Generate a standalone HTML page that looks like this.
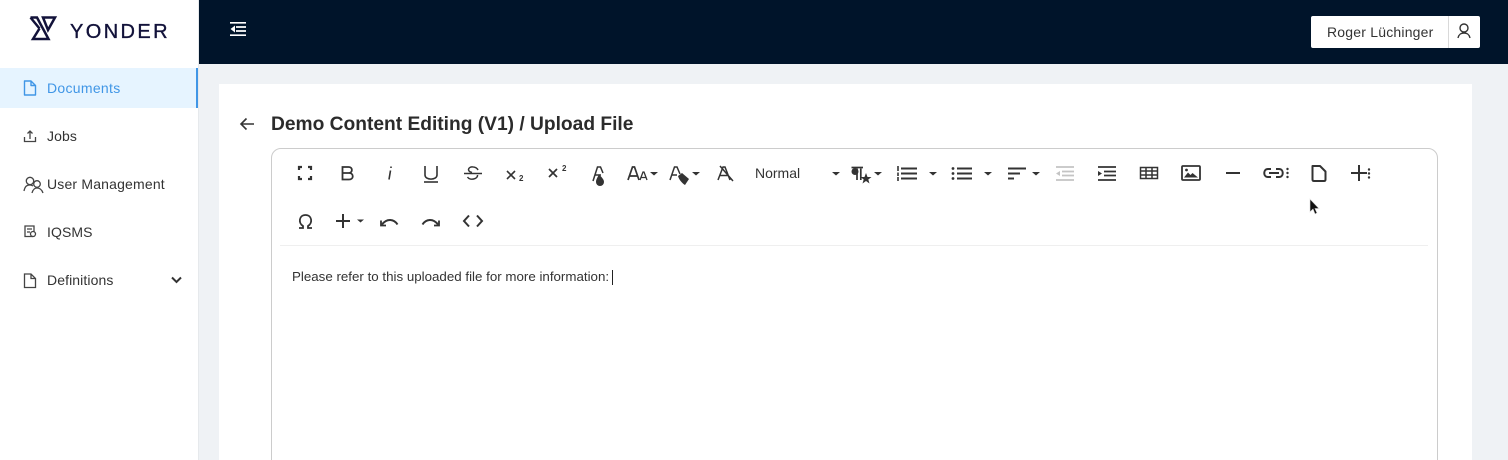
<!DOCTYPE html>
<html><head><meta charset="utf-8"><style>
*{box-sizing:border-box}
html,body{margin:0;padding:0;width:1508px;height:460px;overflow:hidden;background:#eff2f5;font-family:"Liberation Sans",sans-serif}
#w{position:absolute;left:0;top:0;width:1508px;height:460px;overflow:hidden;background:#eff2f5}
.a{position:absolute;white-space:nowrap}
.nav{font-size:14px;color:#333;left:47px;line-height:20px;letter-spacing:.1px}
</style></head><body><div id="w">
<div class="a" style="left:0;top:0;width:199px;height:460px;background:#fff;border-right:1px solid #e6e9ec"></div>
<div class="a" style="left:199px;top:0;width:1309px;height:64px;background:#00142a"></div>
<div class="a" style="left:0;top:68px;width:198px;height:40px;background:#e6f4ff;border-right:2px solid #4096e6"></div>
<div class="a" style="left:219px;top:84px;width:1253px;height:376px;background:#fff"></div>
<div class="a" style="left:271px;top:148px;width:1167px;height:330px;background:#fff;border:1px solid #ccc;border-radius:10px"></div>
<div class="a" style="left:280px;top:245px;width:1148px;height:1px;background:#efefef"></div>

<div class="a" style="left:70px;top:19px;font-size:20px;line-height:26px;letter-spacing:2.4px;color:#12123a;-webkit-text-stroke:.35px #12123a">YONDER</div>
<div class="a nav" style="top:78px;color:#4096e6;letter-spacing:.3px">Documents</div>
<div class="a nav" style="top:126px">Jobs</div>
<div class="a nav" style="top:174px;letter-spacing:.18px">User Management</div>
<div class="a nav" style="top:222px">IQSMS</div>
<div class="a nav" style="top:270px">Definitions</div>

<div class="a" style="left:1311px;top:16px;width:169px;height:32px;background:#fff;border-radius:2px"></div>
<div class="a" style="left:1448px;top:16px;width:1px;height:32px;background:#d9d9d9"></div>
<div class="a" style="left:1327px;top:22px;font-size:14px;line-height:20px;color:#333;letter-spacing:.2px">Roger Lüchinger</div>

<div class="a" style="left:271px;top:112px;font-size:19.2px;line-height:26px;font-weight:700;color:#2b2b2b">Demo Content Editing (V1) / Upload File</div>
<div class="a" style="left:755px;top:165px;font-size:14px;line-height:16px;color:#333">Normal</div>
<div class="a" style="left:292px;top:269px;font-size:13.33px;line-height:16px;color:#333">Please refer to this uploaded file for more information:</div>
<div class="a" style="left:612px;top:270px;width:1px;height:15px;background:#222"></div>

<svg class="a" style="left:0;top:0" width="1508" height="460" viewBox="0 0 1508 460" fill="none">
<!-- logo -->
<g stroke="#12123a" stroke-width="2.500" fill="none" stroke-linejoin="miter">
<path d="M30.500 17.500H37L48.500 39H33L39.500 28.500"/><path d="M30.500 17.500L39.500 28.500"/>
<path d="M43 17.500H55L48 30Z"/>
</g>
<!-- sidebar -->
<g stroke="#4096e6" stroke-width="1.400" stroke-linejoin="round"><path d="M24.500 81H31L35.500 85.500V95H24.500Z M31 81V85.500H35.500"/></g>
<g stroke="#444" stroke-width="1.300">
<path d="M24.500 137V141.500H35.500V137M30 139V131M27.500 133.500L30 131L32.500 133.500"/>
<circle cx="30" cy="181" r="3.700"/><path d="M24 191C25 186 27 185 30 185C31 185 32 185.300 33 186"/>
<circle cx="37" cy="184" r="3.300"/><path d="M32 193C33 189 35 188 37 188C40 188 42 190 43 193"/>
<path d="M33 236.500H25V226H34V232M27 229H32M27 232H30"/><circle cx="33" cy="234" r="2.500"/>
<path d="M24.500 274H31L35.500 278.500V287.500H24.500Z M31 274V278.500H35.500"/>
</g>
<path d="M172 277.500L176.500 282L181 277.500" stroke="#333" stroke-width="2"/>
<!-- header -->
<g stroke="#fff" stroke-width="1.700">
<path d="M230 22.800H246M236 27H246M236 31H246M230 35.200H246"/></g>
<path d="M235 25.500L230.500 29L235 32.500Z" fill="#fff"/>
<g stroke="#333" stroke-width="1.400"><circle cx="1464" cy="28" r="4"/><path d="M1458 38C1459 34 1461 33 1464 33C1467 33 1469 34 1470 38"/></g>
<!-- back -->
<path d="M254 124H241M246.500 118.500L241 124L246.500 129.500" stroke="#333" stroke-width="1.600"/>
<!-- toolbar -->
<g stroke="#333" stroke-width="2">
<path d="M299 170V167H302M308 167H311V170M311 176V179H308M302 179H299V176" stroke-width="2.200"/>
<path d="M342.500 167H348.500C353 167 353 173 348.500 173H342.500ZM342.500 173H349C354 173 354 179.500 349 179.500H342.500Z" stroke-width="1.800"/>
<path d="M391 168V166.500M389 179.500L390.500 170.500" stroke-width="1.600"/>
<path d="M425 166V175C425 180.500 437 180.500 437 175V166" stroke-width="1.600"/><path d="M424 182H438" stroke-width="1.600"/>
<path d="M464 173.500H482" stroke-width="1.500"/><path d="M478 170C476 166 469 166 468.500 169.500C468.500 171 470 172 472 172.500M477.500 175C478 179 470 181 467.500 177" stroke-width="1.500"/>
<path d="M507 171L515 179M515 171L507 179" stroke-width="1.600"/>
<path d="M549 169L557 177M557 169L549 177" stroke-width="1.700"/>
<path d="M593 181L597.500 167H600.500L603 173M595.500 175H601" stroke-width="1.500"/>
<path d="M628 180L632.500 167H634.500L639 180M629.500 176H637.500" stroke-width="1.700"/>
<path d="M640 180L643 172H644L647 180M641 177.500H646" stroke-width="1.300"/>
<path d="M670 180L674.500 167H677L680 174M672 175H677" stroke-width="1.500"/>
<path d="M718 180L723 167H725L730 180M720 175.500H728M720 166L733 181" stroke-width="1.500"/>
<path d="M857 168.500V180M860.800 168.500V180" stroke-width="1.700"/>
<path d="M851.500 167.500H863" stroke-width="1.700"/>
<path d="M901 168.500H917M901 173.500H917M901 178.500H917M957 168.500H972M957 173.500H972M957 178.500H972" stroke-width="2"/>
<path d="M1008 168.500H1026M1008 173.500H1020M1008 178.500H1014" stroke-width="1.900"/>
<path d="M1098 167H1116M1104 171.500H1116M1104 175.500H1116M1098 180H1116" stroke-width="1.800"/>
<path d="M1140.500 167.500H1157.500V178.500H1140.500ZM1140.500 171H1157.500M1140.500 175H1157.500M1146 167.500V178.500M1152 167.500V178.500" stroke-width="1.500"/>
<rect x="1182" y="166" width="18" height="14" rx="1" stroke-width="1.800"/>
<path d="M1226 173H1240" stroke-width="2"/>
<path d="M1271 169H1268C1263 169 1263 177 1268 177H1271M1276 169H1279C1284 169 1284 177 1279 177H1276M1269 173H1279" stroke-width="2"/>
<path d="M1312.500 166H1320L1325.500 171.500V179.500Q1325.500 181 1324 181H1314Q1312.500 181 1312.500 179.500Z" stroke-width="2" stroke-linejoin="round"/>
<path d="M1351 173H1367M1359 165V181M336 221H350M343 214V228" stroke-width="2"/>
<path d="M381 220.500V225.500H386" stroke-width="1.800"/><path d="M382 224.500C387 218 394 219 397.500 224.500" stroke-width="2"/>
<path d="M439 220.500V225.500H434" stroke-width="1.800"/><path d="M438 224.500C433 218 426 219 422.500 224.500" stroke-width="2"/>
<path d="M469 215.500L464 221L469 226.500M477 215.500L482 221L477 226.500" stroke-width="2"/>
<path d="M299 228H303V226C298 223 299 215 305.500 215C312 215 313 223 308 226V228H312" stroke-width="1.800"/>
</g>
<path d="M1056 167H1074M1062 171.500H1074M1062 175.500H1074M1056 180H1074" stroke="#c4c4c4" stroke-width="1.800"/>
<g fill="#333">
<path d="M599 174C601 177 604 179 604 182A4 4 0 0 1 596 182C596 179 598 177 599 174Z"/>
<path d="M678 176L682 173L689 179L685 185C683 184 679 180 678 176Z"/>
<circle cx="855" cy="171.500" r="3.500"/>
<path d="M866 173L867.500 177H871.500L868.300 179.500L869.500 183.500L866 181L862.500 183.500L863.700 179.500L860.500 177H864.500Z"/>
<path d="M1184 177.500L1188 172.500L1190.500 175L1192.500 173L1198 177.500Z"/>
<circle cx="1186.500" cy="170" r="1.400"/>
<path d="M357 219.500H364L360.500 222.500ZM650 172H658L654 175.500ZM692 172H700L696 175.500ZM832 172H840L836 175.500ZM874 172H882L878 175.500ZM929 172H937L933 175.500ZM984 172H992L988 175.500ZM1032 172H1040L1036 175.500Z"/>
<path d="M1098 171L1102 173.500L1098 176Z"/>
<path d="M1056 173.500L1060 171V176Z" fill="#c4c4c4"/>
<circle cx="953" cy="168.500" r="1.400"/><circle cx="953" cy="173.500" r="1.400"/><circle cx="953" cy="178.500" r="1.400"/>
<circle cx="1287.500" cy="169" r="1.200"/><circle cx="1287.500" cy="173" r="1.200"/><circle cx="1287.500" cy="177" r="1.200"/>
<circle cx="1369" cy="169.500" r="1.200"/><circle cx="1369" cy="173.500" r="1.200"/><circle cx="1369" cy="177.500" r="1.200"/>
<path d="M897 166H899V171H897ZM897 172.500H899V176H897ZM897 177H899V181H897Z" opacity=".8"/>
<path d="M1310 199V212L1313 209L1315 214L1317 213L1315 208.500H1319Z" fill="#111" stroke="#ddd" stroke-width=".6"/>
</g>
<g fill="#333" font-family="Liberation Sans,sans-serif" font-weight="700">
<text x="519" y="181" font-size="8">2</text>
<text x="562" y="171" font-size="8">2</text>
</g>
</svg>
</div></body></html>
